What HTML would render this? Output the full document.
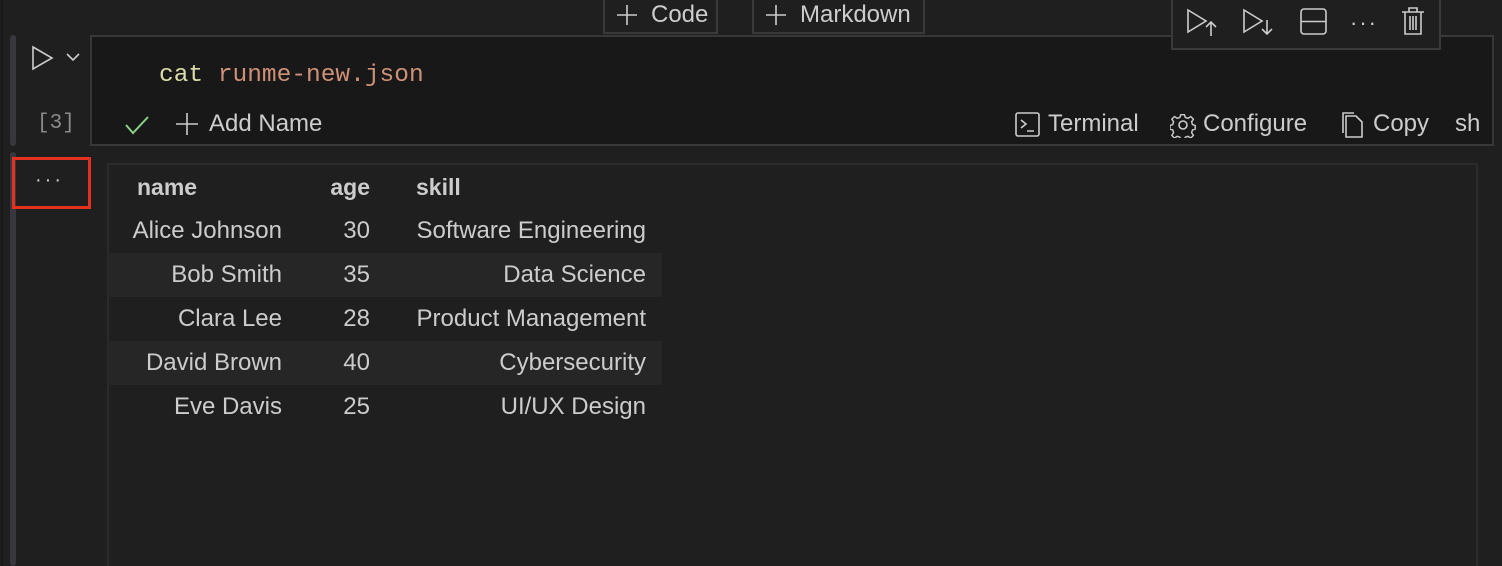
<!DOCTYPE html>
<html><head><meta charset="utf-8"><style>
*{margin:0;padding:0;box-sizing:border-box}
html,body{width:1502px;height:566px;overflow:hidden}
body{background:#1f1f1f;position:relative;font-family:"Liberation Sans",sans-serif;color:#cccccc}
.abs{position:absolute}
.btn{position:absolute;top:-2px;height:36px;border:2px solid #3a3a3a;border-top:none;background:#1f1f1f;font-size:24px;color:#cccccc;display:flex;align-items:center;padding-left:10px;gap:12px}
.ed{left:90px;top:35px;width:1404px;height:111px;background:#181818;border:2px solid #383838}
.tb{left:1171px;top:-2px;width:270px;height:52px;background:#1f1f1f;border:2px solid #3a3a3a;z-index:3}
table{border-collapse:collapse;font-size:24px;color:#cccccc;table-layout:fixed;width:554px}
td,th{height:44px;text-align:right;padding:0 16px;white-space:nowrap}
th{font-weight:bold;text-align:left;font-size:23px}
tr.s td{background:#262626}
.icon{stroke:#cccccc;fill:none;stroke-width:1.6}
.t{font-size:24px}
</style></head><body>
<div class="abs" style="left:1px;top:0;width:2px;height:566px;background:#181818"></div>
<div class="abs" style="left:10px;top:35px;width:6px;height:111px;background:#37373d;border-radius:3px"></div>
<div class="abs" style="left:10px;top:152px;width:6px;height:414px;background:#37373d;border-radius:3px"></div>

<div class="btn" style="left:603px;width:115px"><svg width="24" height="24" class="icon"><path d="M12 2v20M2 12h20"/></svg>Code</div>
<div class="btn" style="left:752px;width:173px"><svg width="24" height="24" class="icon"><path d="M12 2v20M2 12h20"/></svg>Markdown</div>

<svg class="abs" style="left:30px;top:44px" width="26" height="28"><path class="icon" d="M3 3L22 14L3 25Z" stroke-width="2"/></svg>
<svg class="abs" style="left:66px;top:52px" width="14" height="10"><path class="icon" d="M1 2l6 6l6-6"/></svg>
<div class="abs" style="left:37px;top:112px;font-family:'Liberation Mono',monospace;font-size:21px;color:#8a8a8a">[3]</div>

<div class="abs ed"></div>
<div class="abs" style="left:159px;top:62px;font-family:'Liberation Mono',monospace;font-size:24.5px"><span style="color:#dcdcaa">cat</span> <span style="color:#ce9178">runme-new.json</span></div>
<svg class="abs" style="left:124px;top:114px" width="26" height="22"><path d="M2 11l7 8L24 3" fill="none" stroke="#89d185" stroke-width="2"/></svg>
<svg class="abs" style="left:175px;top:112px" width="24" height="24"><path class="icon" d="M12 1v22M1 12h22"/></svg>
<div class="abs t" style="left:209px;top:110px">Add Name</div>

<svg class="abs" style="left:1015px;top:112px" width="26" height="26"><rect class="icon" x="1" y="1" width="23" height="23" rx="2"/><path class="icon" d="M6 8l5 4l-5 4M12 19h7"/></svg>
<div class="abs t" style="left:1048px;top:110px">Terminal</div>
<svg class="abs" style="left:1170px;top:112px" width="26" height="26"><circle class="icon" cx="13" cy="13" r="4"/><path class="icon" d="M11 2h4l1 3l3 1l3-2l3 3l-2 3l1 3l3 1v4l-3 1l-1 3l2 3l-3 3l-3-2l-3 1l-1 3h-4l-1-3l-3-1l-3 2l-3-3l2-3l-1-3l-3-1v-4l3-1l1-3l-2-3l3-3l3 2l3-1z" transform="scale(0.9) translate(1 1)"/></svg>
<div class="abs t" style="left:1203px;top:110px">Configure</div>
<svg class="abs" style="left:1340px;top:111px" width="24" height="28"><path class="icon" d="M6 5h10l6 6v15H6z M3 22V2h11"/></svg>
<div class="abs t" style="left:1373px;top:110px">Copy</div>
<div class="abs t" style="left:1455px;top:110px">sh</div>

<div class="abs tb">
<svg class="abs" style="left:12px;top:8px" width="34" height="30"><path class="icon" d="M3 2L21 13L3 24Z"/><path class="icon" d="M26 28V14M21 19l5-5l5 5"/></svg>
<svg class="abs" style="left:68px;top:8px" width="34" height="30"><path class="icon" d="M3 2L21 13L3 24Z"/><path class="icon" d="M26 12V26M21 21l5 5l5-5"/></svg>
<svg class="abs" style="left:127px;top:8px" width="28" height="28"><rect class="icon" x="1" y="1" width="25" height="25" rx="3"/><path class="icon" d="M1 13.5h25"/></svg>
<div class="abs" style="left:177px;top:10px;font-size:22px;letter-spacing:2px">···</div>
<svg class="abs" style="left:227px;top:6px" width="26" height="30"><path class="icon" d="M2 6h22M9 6V2h8v4M5 6v22h16V6M10 10v14M13 10v14M16 10v14"/></svg>
</div>

<div class="abs" style="left:12px;top:157px;width:79px;height:52px;border:3px solid #e2321f"></div>
<div class="abs" style="left:35px;top:169px;font-size:20px;letter-spacing:3px">···</div>

<div class="abs" style="left:107px;top:163px;width:1371px;height:420px;border:2px solid #2b2b2b;background:#1f1f1f"></div>
<table class="abs" style="left:108px;top:165px">
<colgroup><col style="width:190px"><col style="width:88px"><col style="width:276px"></colgroup>
<tr><th style="padding-left:29px">name</th><th style="text-align:right">age</th><th style="padding-left:30px">skill</th></tr>
<tr><td>Alice Johnson</td><td>30</td><td>Software Engineering</td></tr>
<tr class="s"><td>Bob Smith</td><td>35</td><td>Data Science</td></tr>
<tr><td>Clara Lee</td><td>28</td><td>Product Management</td></tr>
<tr class="s"><td>David Brown</td><td>40</td><td>Cybersecurity</td></tr>
<tr><td>Eve Davis</td><td>25</td><td>UI/UX Design</td></tr>
</table>
</body></html>
